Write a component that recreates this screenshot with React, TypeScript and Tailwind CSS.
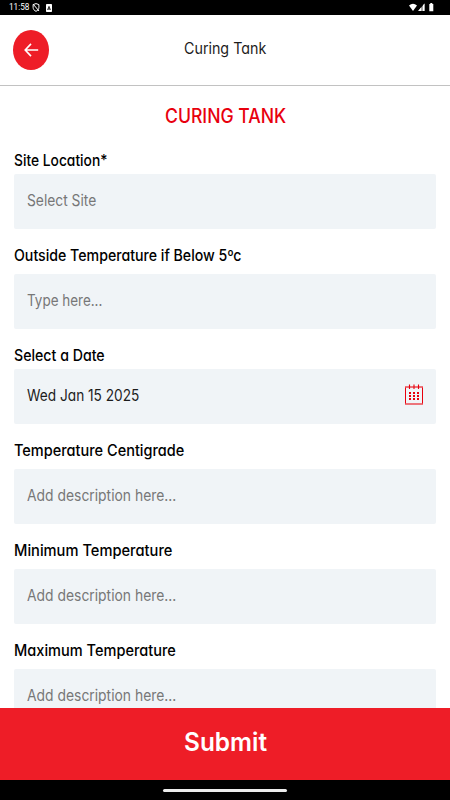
import { useLayoutEffect, useRef, useState } from "react";

type FitProps = { text: string; width: number; className?: string };

/* Condenses a single line of text horizontally so it takes exactly `width` pixels. */
function Fit({ text, width, className = "" }: FitProps) {
  const ref = useRef<HTMLSpanElement>(null);
  const [scale, setScale] = useState(1);
  useLayoutEffect(() => {
    if (ref.current) setScale(width / ref.current.offsetWidth);
  }, [text, width]);
  return (
    <span className={`block whitespace-nowrap ${className}`} style={{ width }}>
      <span ref={ref} className="inline-block origin-left" style={{ transform: `scaleX(${scale})` }}>
        {text}
      </span>
    </span>
  );
}

type Field = {
  label: string;
  labelWidth: number;
  value: string;
  valueWidth: number;
  tight?: boolean;
  date?: boolean;
};

const fields: Field[] = [
  { label: "Site Location*", labelWidth: 93.5, value: "Select Site", valueWidth: 69.5, tight: true },
  { label: "Outside Temperature if Below 5ºc", labelWidth: 227.5, value: "Type here...", valueWidth: 75.5 },
  { label: "Select a Date", labelWidth: 90.5, value: "Wed Jan 15 2025", valueWidth: 112, tight: true, date: true },
  { label: "Temperature Centigrade", labelWidth: 170.5, value: "Add description here...", valueWidth: 149.5 },
  { label: "Minimum Temperature", labelWidth: 158, value: "Add description here...", valueWidth: 149.5 },
  { label: "Maximum Temperature", labelWidth: 161.5, value: "Add description here...", valueWidth: 149.5 },
];

function CalendarIcon() {
  return (
    <svg width="20" height="22" viewBox="0 0 20 22" fill="none" stroke="#e8000d">
      <path d="M1.5 3.5V19.5M18.5 3.5V19.5" />
      <path d="M1 3h18M1 20h18" strokeWidth="1.6" opacity="0.7" />
      <path d="M5.5 0.5V5M10 0.5V5M14.5 0.5V5" strokeWidth="1.1" />
      <path d="M5 9h2M9 9h2M13 9h2M5 12h2M9 12h2M13 12h2M5 15h2M9 15h2M13 15h2" strokeWidth="2" />
    </svg>
  );
}

function StatusBar() {
  return (
    <div className="flex h-[15px] shrink-0 items-center bg-black pl-[9px] pr-[15px] text-white">
      <Fit text="11:58" width={20} className="font-['Roboto',sans-serif] text-[9px] leading-[15px]" />
      <svg className="ml-[3px]" width="8" height="9" viewBox="0 0 8 9" fill="none" stroke="white" strokeWidth="1">
        <path d="M4 .6 6.9 1.6V4.4C6.9 6.2 5.6 7.7 4 8.3 2.4 7.7 1.1 6.2 1.1 4.4V1.6ZM1 1l6 7" />
      </svg>
      <svg className="ml-[6px]" width="6" height="8" viewBox="0 0 6 8">
        <rect width="6" height="8" rx="0.7" fill="white" />
        <path d="M1.6 6 3 2.4 4.4 6M2 5h2" fill="none" stroke="black" strokeWidth="0.8" />
      </svg>
      <svg className="ml-auto" width="26" height="9" viewBox="0 0 26 9" fill="white">
        <path d="M0 2.4Q4-1 8 2.4L4 8Z" />
        <path d="M15.5.5V8H9.2Z" opacity="0.65" />
        <path d="M15.5.5V8H14V2.3ZM12 4.6V8H9.2Z" />
        <path d="M20.3 1h1V0h2v1h1v7.3h-4Z" />
      </svg>
    </div>
  );
}

export default function App() {
  return (
    <div className="flex h-[800px] w-[450px] flex-col overflow-hidden bg-white font-['Inter',sans-serif] text-black [font-feature-settings:'cv11']">
      <StatusBar />
      <header className="grid h-[71px] shrink-0 grid-cols-[36px_1fr_36px] items-center border-b border-[#c2c2c2] px-[13.4px]">
        <button className="flex h-10 w-9 items-center justify-center rounded-[50%] bg-[#ee1d27]">
          <svg width="15" height="14" viewBox="0 0 15 14" fill="none" stroke="white" strokeWidth="1.6">
            <path d="M14.2 7H1.2M7 .9 1.2 7 7 13.1" />
          </svg>
        </button>
        <h1 className="flex justify-center pb-[3px]">
          <Fit text="Curing Tank" width={82} className="text-[15.5px] leading-5 font-normal text-[#1c1c1c]" />
        </h1>
      </header>
      <main className="min-h-0 flex-1 overflow-hidden px-[14px] pt-[18px]">
        <h2 className="mb-[22px] flex justify-center">
          <Fit text="CURING TANK" width={121} className="text-[19.5px] leading-6 font-medium text-[#e8000d]" />
        </h2>
        {fields.map((field) => (
          <section key={field.label} className="mb-4">
            <Fit
              text={field.label}
              width={field.labelWidth}
              className={`-ml-[0.5px] text-[15.5px] leading-[21px] font-[450] ${field.tight ? "mb-[3px]" : "mb-2"}`}
            />
            <div className="flex h-[55px] items-center justify-between rounded-[2px] bg-[#f0f4f7] pr-[12px] pb-[3px] pl-[13px]">
              <Fit
                text={field.value}
                width={field.valueWidth}
                className={`text-[15.5px] leading-[21px] ${field.date ? "text-[#1c1c1c]" : "text-[#777777]"}`}
              />
              {field.date && <CalendarIcon />}
            </div>
          </section>
        ))}
      </main>
      <button className="flex h-[72px] shrink-0 items-center justify-center bg-[#ee1d27] pb-[5px] text-white">
        <Fit text="Submit" width={83} className="text-[25px] leading-8 font-semibold" />
      </button>
      <div className="flex h-5 shrink-0 items-center justify-center bg-black">
        <div className="h-[3px] w-[124px] rounded-full bg-[#ececec]" />
      </div>
    </div>
  );
}
